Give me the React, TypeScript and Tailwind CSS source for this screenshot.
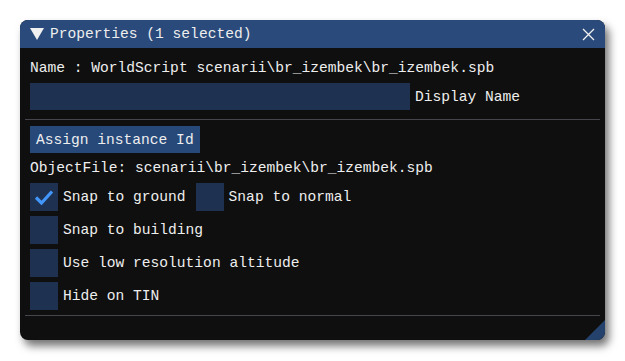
const rows = [
  { label: "Snap to building", checked: false },
  { label: "Use low resolution altitude", checked: false },
  { label: "Hide on TIN", checked: false },
];

function Checkbox({ checked }: { checked?: boolean }) {
  return (
    <div className="w-[28px] h-[28px] bg-[#1f3150] flex items-center justify-center shrink-0">
      {checked && (
        <svg width="20" height="16" viewBox="0 0 20 16">
          <path d="M2 8.5 L7.5 14 L18 2.5" fill="none" stroke="#4296fa" strokeWidth="3.2" />
        </svg>
      )}
    </div>
  );
}

export default function App() {
  return (
    <div
      className="w-[625px] h-[361px] bg-white pt-[20px] pl-[20px] text-[14.6px] text-[#eeeeee]"
      style={{ fontFamily: '"Liberation Mono", "DejaVu Sans Mono", monospace' }}
    >
      <div className="w-[585px] h-[320px] rounded-[8px] overflow-hidden flex flex-col bg-[#0f0f0f] shadow-[4px_6px_8px_rgba(0,0,0,0.55)] relative">
        <div className="h-[28px] bg-[#294a7a] flex items-center pl-[10px] pr-[10px] shrink-0">
          <svg width="14" height="12" viewBox="0 0 14 12" className="mr-[6px]">
            <path d="M0 0 H14 L7 12 Z" fill="#f0f0f0" />
          </svg>
          <span className="leading-[20px]">Properties (1 selected)</span>
          <svg width="13" height="13" viewBox="0 0 13 13" className="ml-auto">
            <path d="M1 1 L12 12 M12 1 L1 12" stroke="#f0f0f0" strokeWidth="1.3" />
          </svg>
        </div>

        <div className="flex flex-col pt-[10px]">
          <div className="px-[10px] leading-[20px] whitespace-pre">
            Name : WorldScript scenarii\br_izembek\br_izembek.spb
          </div>
          <div className="px-[10px] mt-[5px] flex items-center gap-[5px]">
            <div className="w-[380px] h-[27px] bg-[#1f3150]" />
            <span className="leading-[20px]">Display Name</span>
          </div>
          <div className="mx-[5px] mt-[9px] h-px bg-[#45454d]" />
          <div className="px-[10px] mt-[6px]">
            <div className="inline-flex items-center h-[27px] px-[6px] bg-[#26497a] leading-[20px]">
              Assign instance Id
            </div>
          </div>
          <div className="px-[10px] mt-[5px] leading-[20px] whitespace-pre">
            ObjectFile: scenarii\br_izembek\br_izembek.spb
          </div>
          <div className="px-[10px] mt-[5px] flex items-center h-[28px]">
            <Checkbox checked />
            <span className="ml-[5px] leading-[20px]">Snap to ground</span>
            <div className="ml-[10px]">
              <Checkbox />
            </div>
            <span className="ml-[5px] leading-[20px]">Snap to normal</span>
          </div>
          {rows.map((r) => (
            <div key={r.label} className="px-[10px] mt-[5px] flex items-center h-[28px]">
              <Checkbox checked={r.checked} />
              <span className="ml-[5px] leading-[20px]">{r.label}</span>
            </div>
          ))}
          <div className="mx-[5px] mt-[5px] h-px bg-[#45454d]" />
        </div>

        <svg width="20" height="20" viewBox="0 0 20 20" className="absolute right-0 bottom-0">
          <path d="M20 0 V20 H0 Z" fill="#24426b" />
        </svg>
      </div>
    </div>
  );
}
